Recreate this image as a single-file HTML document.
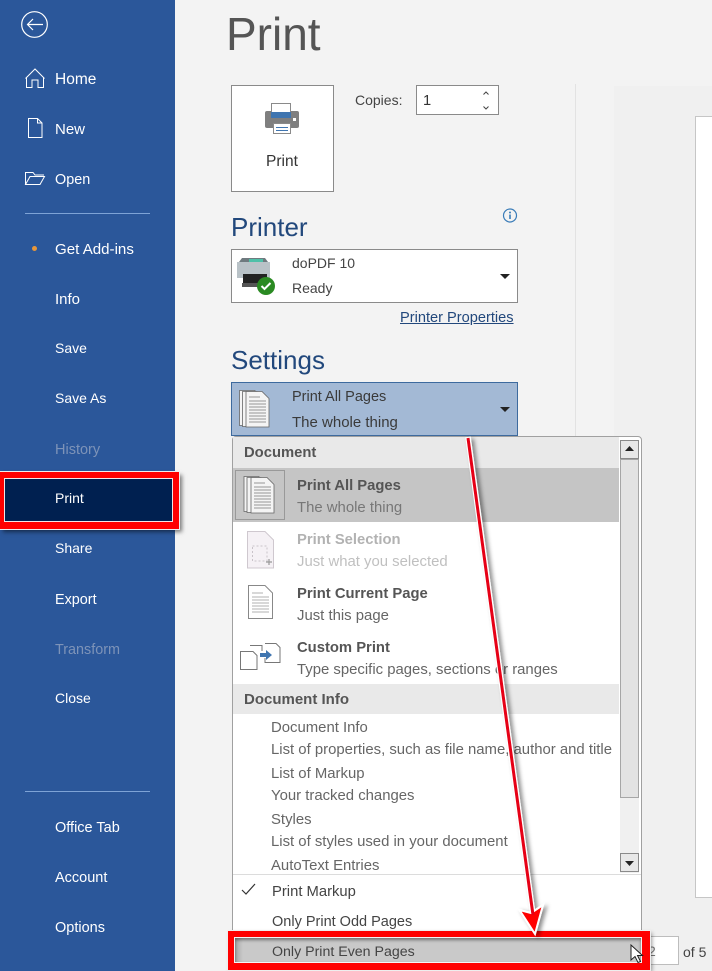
<!DOCTYPE html>
<html style="width:712px;height:971px;overflow:hidden"><head><meta charset="utf-8"><style>
html,body{margin:0;padding:0}
body{width:712px;height:971px;overflow:hidden;position:relative;background:#f3f3f3;font-family:"Liberation Sans",sans-serif;font-size:14.7px;color:#444}
.a{position:absolute}
.t{position:absolute;white-space:nowrap;line-height:20px;height:20px}
.m{color:#fff;left:55px;font-size:14px}
.d{color:#7d93b8}
.b{font-weight:bold;color:#555;font-size:14.8px}
.g{color:#666;font-size:14.9px}
.h{color:#22487c;font-size:26px;line-height:32px;height:32px}
svg{position:absolute;overflow:visible}
</style></head><body>
<div class="a" style="left:0;top:0;width:175px;height:971px;background:#2b579a"></div>
<svg style="left:0;top:0" width="175" height="240" fill="none" stroke="#fff" stroke-width="1">
<circle cx="34.5" cy="24.5" r="12.8" stroke-width="1.2"/>
<path d="M28 24.5H43M33 19l-5.5 5.5L33 30" stroke-width="1.2"/>
<path d="M25.5 78.5L35 69l9.5 9.5M26.5 77.5V87.5H32V80H38V87.5H43.5V77.5"/>
<path d="M28.5 118.5H37.5L42 123V137.5H28.5ZM37.5 118.5V123H42"/>
<path d="M25.5 184.5V172.5H33L35 175H44M25.5 184.5L30 176.5H44.5L40 184.5Z"/>
</svg>
<div class="t m" style="top:70px;font-size:15.5px">Home</div>
<div class="t m" style="top:120px;font-size:15px">New</div>
<div class="t m" style="top:170px;font-size:14.4px">Open</div>
<div class="a" style="left:25px;top:213px;width:125px;height:1px;background:#7ea3d6"></div>
<div class="a" style="left:32px;top:246px;width:5px;height:5px;border-radius:50%;background:#e8973a"></div>
<div class="t m" style="top:240px;font-size:15.1px">Get Add-ins</div>
<div class="t m" style="top:290px;font-size:15px">Info</div>
<div class="t m" style="top:338px">Save</div>
<div class="t m" style="top:388px">Save As</div>
<div class="t m d" style="top:440px;font-size:14.5px">History</div>
<div class="t m" style="top:538px">Share</div>
<div class="t m" style="top:590px;font-size:14.4px">Export</div>
<div class="t m d" style="top:640px;font-size:14.4px">Transform</div>
<div class="t m" style="top:688px">Close</div>
<div class="a" style="left:25px;top:791px;width:125px;height:1px;background:#7ea3d6"></div>
<div class="t m" style="top:818px;font-size:14.5px">Office Tab</div>
<div class="t m" style="top:868px;font-size:14.5px">Account</div>
<div class="t m" style="top:918px;font-size:14.5px">Options</div>

<div class="a" style="left:575px;top:84px;width:1px;height:887px;background:#e2e2e2"></div>
<div class="a" style="left:614px;top:86px;width:98px;height:885px;background:#f0f0f0"></div>
<div class="a" style="left:695px;top:116px;width:17px;height:782px;background:#fff;border-left:1px solid #c6c6c6;border-top:1px solid #c6c6c6;border-bottom:1px solid #c6c6c6;box-sizing:border-box"></div>

<div class="t" style="left:226px;top:5px;font-size:46px;line-height:58px;height:58px;color:#555">Print</div>

<div class="a" style="left:231px;top:85px;width:103px;height:107px;box-sizing:border-box;border:1px solid #8a8a8a;background:#fff"></div>
<svg style="left:231px;top:85px" width="103" height="107">
<rect x="34" y="26" width="34" height="17" rx="2" fill="#7f7f7f"/>
<rect x="40.5" y="18.5" width="19" height="14" fill="#fff" stroke="#8a8a8a"/>
<rect x="40" y="27" width="20" height="6" fill="#3f75b0"/>
<rect x="42.5" y="38.5" width="17" height="10" fill="#fff" stroke="#8a8a8a"/>
<path d="M45 42.5H57M45 45.5H57" stroke="#3f75b0"/>
<rect x="62" y="33" width="3" height="3" fill="#fff"/>
</svg>
<div class="t" style="left:266px;top:152px;color:#333;font-size:15.5px">Print</div>

<div class="t" style="left:355px;top:90px;color:#444;font-size:14px">Copies:</div>
<div class="a" style="left:416px;top:85px;width:83px;height:30px;box-sizing:border-box;border:1px solid #8a8a8a;background:#fff"></div>
<div class="t" style="left:423px;top:91px;color:#333">1</div>
<svg style="left:416px;top:85px" width="83" height="30" fill="none" stroke="#444">
<path d="M67.5 9.5L70 7l2.5 2.5M67.5 21.5L70 24l2.5-2.5"/>
</svg>

<div class="t h" style="left:231px;top:211px">Printer</div>
<svg style="left:502px;top:208px" width="16" height="16">
<circle cx="8" cy="7.5" r="6.5" fill="none" stroke="#3a7cb8" stroke-width="1.2"/>
<path d="M8 6.5V11" stroke="#3a7cb8" stroke-width="1.6"/><circle cx="8" cy="4.5" r="1" fill="#3a7cb8"/>
</svg>
<div class="a" style="left:231px;top:249px;width:287px;height:54px;box-sizing:border-box;border:1px solid #8a8a8a;background:#fff"></div>
<svg style="left:231px;top:249px" width="287" height="54">
<path d="M8 13L11 9H34L37 13Z" fill="#6f7a7f"/>
<rect x="6" y="13" width="33" height="16" fill="#b9c2c7"/>
<rect x="18" y="10" width="14" height="3" fill="#4fc0a8"/>
<rect x="12" y="25" width="24" height="9" fill="#222"/>
<rect x="11" y="34" width="24" height="4" fill="#555"/>
<circle cx="35" cy="37" r="9" fill="#2a8a22"/>
<path d="M30.5 37l3 3 6-6" stroke="#fff" stroke-width="2" fill="none"/>
<path d="M269 25H279L274 30Z" fill="#222"/>
</svg>
<div class="t" style="left:292px;top:253px;color:#444;font-size:14px">doPDF 10</div>
<div class="t" style="left:292px;top:278px;color:#444;font-size:14px">Ready</div>
<div class="t" style="left:400px;top:308px;color:#22487c;text-decoration:underline;font-size:14.6px">Printer Properties</div>

<div class="t h" style="left:231px;top:344px">Settings</div>
<div class="a" style="left:231px;top:382px;width:287px;height:54px;box-sizing:border-box;border:1px solid #3d6a9e;background:#a3b9d5"></div>
<svg style="left:231px;top:382px" width="287" height="54">
<g fill="#f4f4f4" stroke="#666" stroke-width=".8">
<path d="M8.5 8.5H24V43.5H8.5Z"/><path d="M11.5 9.5H26V44.5H11.5Z"/><path d="M15 9.5H31L38 16.5V45H15Z"/>
</g>
<path d="M18 15H29M18 19H35M18 22H35M18 25H35M18 28H35M18 31H35M18 34H35M18 37H35M18 40H35" stroke="#777" stroke-width=".8"/>
<path d="M269 25H279L274 30Z" fill="#222"/>
</svg>
<div class="t" style="left:292px;top:387px;color:#3a3a3a;font-size:14.5px">Print All Pages</div>
<div class="t" style="left:292px;top:413px;color:#3a3a3a;font-size:15px">The whole thing</div>

<div class="a" style="left:232px;top:436px;width:410px;height:540px;box-sizing:border-box;border:1px solid #a0a0a0;border-radius:4px;background:#fff"></div>
<div class="a" style="left:233px;top:437px;width:386px;height:31px;background:#e9e9e9"></div>
<div class="t b" style="left:244px;top:443px">Document</div>
<div class="a" style="left:233px;top:468px;width:386px;height:54px;background:#c5c5c5"></div>
<div class="a" style="left:235px;top:470px;width:50px;height:50px;box-sizing:border-box;border:1px solid #999"></div>
<svg style="left:235px;top:470px" width="50" height="50">
<g fill="#f4f4f4" stroke="#666" stroke-width=".8">
<path d="M9 6.5H24V41.5H9Z"/><path d="M12 7.5H26V42.5H12Z"/><path d="M16 7.5H32L39 14.5V43H16Z"/>
</g>
<path d="M19 13H30M19 17H36M19 20H36M19 23H36M19 26H36M19 29H36M19 32H36M19 35H36M19 38H36" stroke="#777" stroke-width=".8"/>
</svg>
<div class="t b" style="left:297px;top:476px">Print All Pages</div>
<div class="t g" style="left:297px;top:498px;color:#777">The whole thing</div>

<svg style="left:247px;top:531px" width="28" height="40">
<path d="M.5 .5H18L26.5 9V37H.5Z" fill="#f5f1f5" stroke="#cfc8cf"/>
<path d="M5.5 15H20V30H5.5Z" fill="none" stroke="#c9c3c9" stroke-dasharray="2 2"/>
<path d="M19 31H25M22 28V34" stroke="#999" stroke-width="1.2"/>
</svg>
<div class="t b" style="left:297px;top:530px;color:#b2b2b2">Print Selection</div>
<div class="t g" style="left:297px;top:552px;color:#c0c0c0">Just what you selected</div>

<svg style="left:248px;top:585px" width="26" height="36">
<path d="M.5 .5H17L24.5 8V33.5H.5Z" fill="#fff" stroke="#888"/>
<path d="M4 8H15M4 12H21M4 15H21M4 18H21M4 21H21M4 24H21M4 27H21" stroke="#999" stroke-width=".8"/>
</svg>
<div class="t b" style="left:297px;top:584px">Print Current Page</div>
<div class="t g" style="left:297px;top:606px">Just this page</div>

<svg style="left:240px;top:642px" width="42" height="30">
<path d="M.5 9.5H13L17 13.5V27.5H.5Z" fill="#fff" stroke="#777"/>
<path d="M10 3.5H22V9" fill="none" stroke="#777"/>
<path d="M25 1.5H36L40 5.5V20.5H25V16" fill="#fff" stroke="#777"/>
<path d="M20 11H26V8L32 13L26 18V15H20Z" fill="#3f75b0"/>
</svg>
<div class="t b" style="left:297px;top:638px">Custom Print</div>
<div class="t g" style="left:297px;top:660px">Type specific pages, sections or ranges</div>

<div class="a" style="left:233px;top:684px;width:386px;height:30px;background:#e9e9e9"></div>
<div class="t b" style="left:244px;top:690px;font-size:15px">Document Info</div>
<div class="t g" style="left:271px;top:718px">Document Info</div>
<div class="t g" style="left:271px;top:740px">List of properties, such as file name, author and title</div>
<div class="t g" style="left:271px;top:764px">List of Markup</div>
<div class="t g" style="left:271px;top:786px">Your tracked changes</div>
<div class="t g" style="left:271px;top:810px">Styles</div>
<div class="t g" style="left:271px;top:832px">List of styles used in your document</div>
<div class="t g" style="left:271px;top:856px">AutoText Entries</div>

<div class="a" style="left:620px;top:440px;width:19px;height:433px;background:#f0f0f0"></div>
<div class="a" style="left:620px;top:459px;width:19px;height:339px;box-sizing:border-box;border:1px solid #a6a6a6;background:#e3e3e3"></div>
<div class="a" style="left:620px;top:440px;width:19px;height:19px;box-sizing:border-box;border:1px solid #8a8a8a;background:#e8e8e8"></div>
<div class="a" style="left:620px;top:853px;width:19px;height:19px;box-sizing:border-box;border:1px solid #8a8a8a;background:#e8e8e8"></div>
<svg style="left:620px;top:440px" width="19" height="433">
<path d="M5 11H14L9.5 6Z" fill="#222"/><path d="M5 421H14L9.5 426Z" fill="#222"/>
</svg>
<div class="a" style="left:233px;top:874px;width:408px;height:1px;background:#dcdcdc"></div>
<svg style="left:240px;top:882px" width="18" height="16"><path d="M2 8L6 12L15 2" fill="none" stroke="#333" stroke-width="1.2"/></svg>
<div class="t" style="left:272px;top:882px;color:#444;font-size:14.8px">Print Markup</div>
<div class="t" style="left:272px;top:912px;color:#444;font-size:14.5px">Only Print Odd Pages</div>

<div class="a" style="left:643px;top:936px;width:36px;height:29px;box-sizing:border-box;border:1px solid #bdbdbd;background:#fff"></div>
<div class="t" style="left:648px;top:941px;color:#777;font-size:14px">2</div>
<div class="t" style="left:683px;top:942px;color:#444;font-size:14px">of 5</div>

<div class="a" style="left:228px;top:931px;width:422px;height:39px;box-sizing:border-box;background:#f00;outline:1px solid #eee;box-shadow:2px 2px 4px rgba(0,0,0,.4)"></div>
<div class="a" style="left:234px;top:937px;width:408px;height:26px;box-sizing:border-box;border:1px solid #f4f4f4;background:linear-gradient(90deg,#a8a8a8,#c9c9c9 8px,#c9c9c9);box-shadow:inset 0 2px 3px rgba(0,0,0,.45)"></div>
<div class="t" style="left:272px;top:942px;color:#444;font-size:14.2px">Only Print Even Pages</div>
<svg style="left:630px;top:944px" width="14" height="20"><path d="M1 1V16L5 12.5L8 18.5L10.5 17.5L7.5 11.5H12.5Z" fill="#fff" stroke="#222"/></svg>

<div class="a" style="left:0;top:472px;width:179px;height:57px;background:#f00;outline:1px solid #eee;box-shadow:3px 3px 4px rgba(0,0,0,.5)"></div>
<div class="a" style="left:4px;top:478px;width:169px;height:44px;box-sizing:border-box;border:1px solid #f2e6e6;background:#002050"></div>
<div class="t m" style="top:488px">Print</div>

<svg style="left:0;top:0" width="712" height="971">
<defs><filter id="s" x="-50%" y="-5%" width="200%" height="110%"><feDropShadow dx="3" dy="2" stdDeviation="2" flood-color="#000" flood-opacity=".45"/></filter></defs>
<g filter="url(#s)">
<path d="M468 437L533 915" stroke="#fff" stroke-width="5.5" fill="none"/>
<path d="M519.5 910L531 913L543 905L535 934Z" fill="#f00" stroke="#fff" stroke-width="2"/>
<path d="M468 438L533 915" stroke="#e60012" stroke-width="3" fill="none"/>
</g>
</svg>
</body></html>
